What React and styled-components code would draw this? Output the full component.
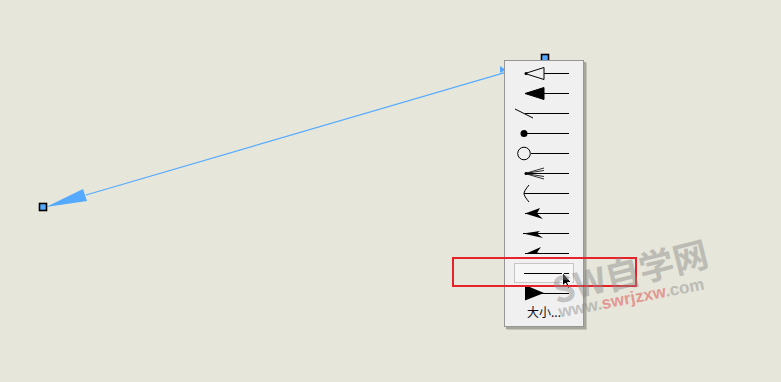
import styled, { createGlobalStyle } from 'styled-components';

const GlobalStyle = createGlobalStyle`
  html, body {
    margin: 0;
    padding: 0;
    background: #e6e6da;
  }
  body {
    font-family: "Liberation Sans", Arial, sans-serif;
  }
`;

const Canvas = styled.div`
  position: relative;
  width: 781px;
  height: 382px;
  overflow: hidden;
  background: #e6e6da;
`;

const Sketch = styled.svg`
  position: absolute;
  left: 0;
  top: 0;
`;

const Menu = styled.div`
  position: absolute;
  left: 504px;
  top: 60px;
  width: 78px;
  height: 263px;
  background: #f0f0f0;
  border: 1px solid #979797;
  box-shadow: 2px 2px 0 #a6a69c, 3px 3px 0 #c4c4b8;
  display: flex;
  flex-direction: column;
  padding-top: 2px;
  box-sizing: content-box;
`;

const Item = styled.div`
  width: 58px;
  height: 18px;
  margin-left: 9px;
  border: 1px solid ${({ $hot }) => ($hot ? '#c6c6c6' : 'transparent')};
  background: ${({ $hot }) => ($hot ? '#f6f6f6' : 'transparent')};
  position: relative;
  flex-shrink: 0;

  svg.icon {
    position: absolute;
    left: -1px;
    top: -1px;
  }
`;

const Label = styled.div`
  margin: 1px 0 0 22px;
  font-family: "Noto Sans CJK SC", "Liberation Sans", sans-serif;
  font-size: 12px;
  line-height: 16px;
  color: #0a0a1e;
`;

const Cursor = styled.svg`
  position: absolute;
  left: 47px;
  top: 8px;
`;

const Mark = styled.div`
  position: absolute;
  left: 452px;
  top: 257px;
  width: 181px;
  height: 26px;
  border: 2px solid #e8222a;
`;

const Watermark = styled.div`
  position: absolute;
  left: 548px;
  top: 271px;
  transform: rotate(-14deg);
  transform-origin: left top;
  opacity: 0.45;
  pointer-events: none;
  white-space: nowrap;
  display: flex;
  flex-direction: column;
  align-items: flex-start;
`;

const Brand = styled.div`
  font-family: "Noto Sans CJK SC", "Liberation Sans", sans-serif;
  font-weight: 700;
  font-size: 35px;
  line-height: 38px;
  color: #8a8a8a;
`;

const Site = styled.div`
  font-family: "Liberation Sans", Arial, sans-serif;
  font-weight: 700;
  font-size: 17px;
  line-height: 18px;
  color: #8a8a8a;
  margin-top: -4px;
  transform: rotate(3deg);
  transform-origin: left bottom;

  span {
    color: #e0383c;
  }
`;

const L = (x1) => (
  <line x1={x1} y1="10.5" x2="55" y2="10.5" stroke="#000" strokeWidth="1" shapeRendering="crispEdges" />
);

const styles = [
  <>
    {L(30)}
    <polygon points="11,10.5 30,4.5 30,16.5" fill="none" stroke="#000" />
    <circle cx="12" cy="10.5" r="1.5" fill="#000" />
  </>,
  <>
    {L(30)}
    <polygon points="11,10.5 30,4.5 30,16.5" fill="#000" stroke="#000" />
  </>,
  <>
    {L(11)}
    <line x1="1" y1="6" x2="19" y2="15" stroke="#000" />
  </>,
  <>
    {L(10)}
    <circle cx="10" cy="10.5" r="3.5" fill="#000" />
  </>,
  <>
    {L(16.5)}
    <circle cx="10" cy="10.5" r="6.3" fill="none" stroke="#000" />
  </>,
  <>
    {L(11)}
    <path d="M11 10.5 L30 5 M11 10.5 L30 7.5 M11 10.5 L30 16 M11 10.5 L30 13.5" stroke="#000" strokeWidth="0.8" fill="none" />
    <circle cx="12" cy="10.5" r="1.5" fill="#000" />
  </>,
  <>
    {L(10)}
    <path d="M15 2 Q10 8 10 10.5 Q10 13 15 19" stroke="#000" fill="none" />
  </>,
  <>
    {L(11)}
    <path d="M11 10.5 L26 5 L23 10.5 L29 16 Z" fill="#000" />
  </>,
  <>
    {L(9)}
    <path d="M9 10.5 L26 8 L23 10.5 L29 15 Z" fill="#000" />
  </>,
  <>
    {L(11)}
    <path d="M11 11 L27 4 L23 9.5 L30 11 Z" fill="#000" />
  </>,
  <>{L(10)}</>,
  <>
    {L(26)}
    <polygon points="11,2 11,17.5 30,10" fill="#000" />
  </>,
];

function ArrowIcon({ children }) {
  return (
    <svg className="icon" width="60" height="20" viewBox="0 0 60 20">
      {children}
    </svg>
  );
}

function ArrowMenu() {
  return (
    <Menu>
      {styles.map((s, i) => (
        <Item key={i} $hot={i === 10}>
          <ArrowIcon>{s}</ArrowIcon>
          {i === 10 && (
            <Cursor width="12" height="18" viewBox="0 0 12 18">
              <path d="M0.5 0.5 L0.5 14 L3.5 11 L6 16.5 L8 15.5 L5.5 10.5 L9.5 10.5 Z" fill="#000" stroke="#fff" strokeWidth="1" />
            </Cursor>
          )}
        </Item>
      ))}
      <Label>大小...</Label>
    </Menu>
  );
}

export default function App() {
  return (
    <Canvas>
      <GlobalStyle />
      <Sketch width="781" height="382" viewBox="0 0 781 382">
        <line x1="86" y1="195" x2="510" y2="71" stroke="#55aaff" strokeWidth="1.2" />
        <polygon points="46,207 83,189 87,201" fill="#55aaff" />
        <rect x="39.5" y="203.5" width="7" height="7" fill="#55aaff" stroke="#000" strokeWidth="1.6" />
        <rect x="541.5" y="54.5" width="7" height="7" fill="#55aaff" stroke="#000" strokeWidth="1.6" />
        <polygon points="500,66 506,70 500,73" fill="#55aaff" />
      </Sketch>
      <ArrowMenu />
      <Mark />
      <Watermark>
        <Brand>SW自学网</Brand>
        <Site>www.<span>swrjzxw</span>.com</Site>
      </Watermark>
    </Canvas>
  );
}
